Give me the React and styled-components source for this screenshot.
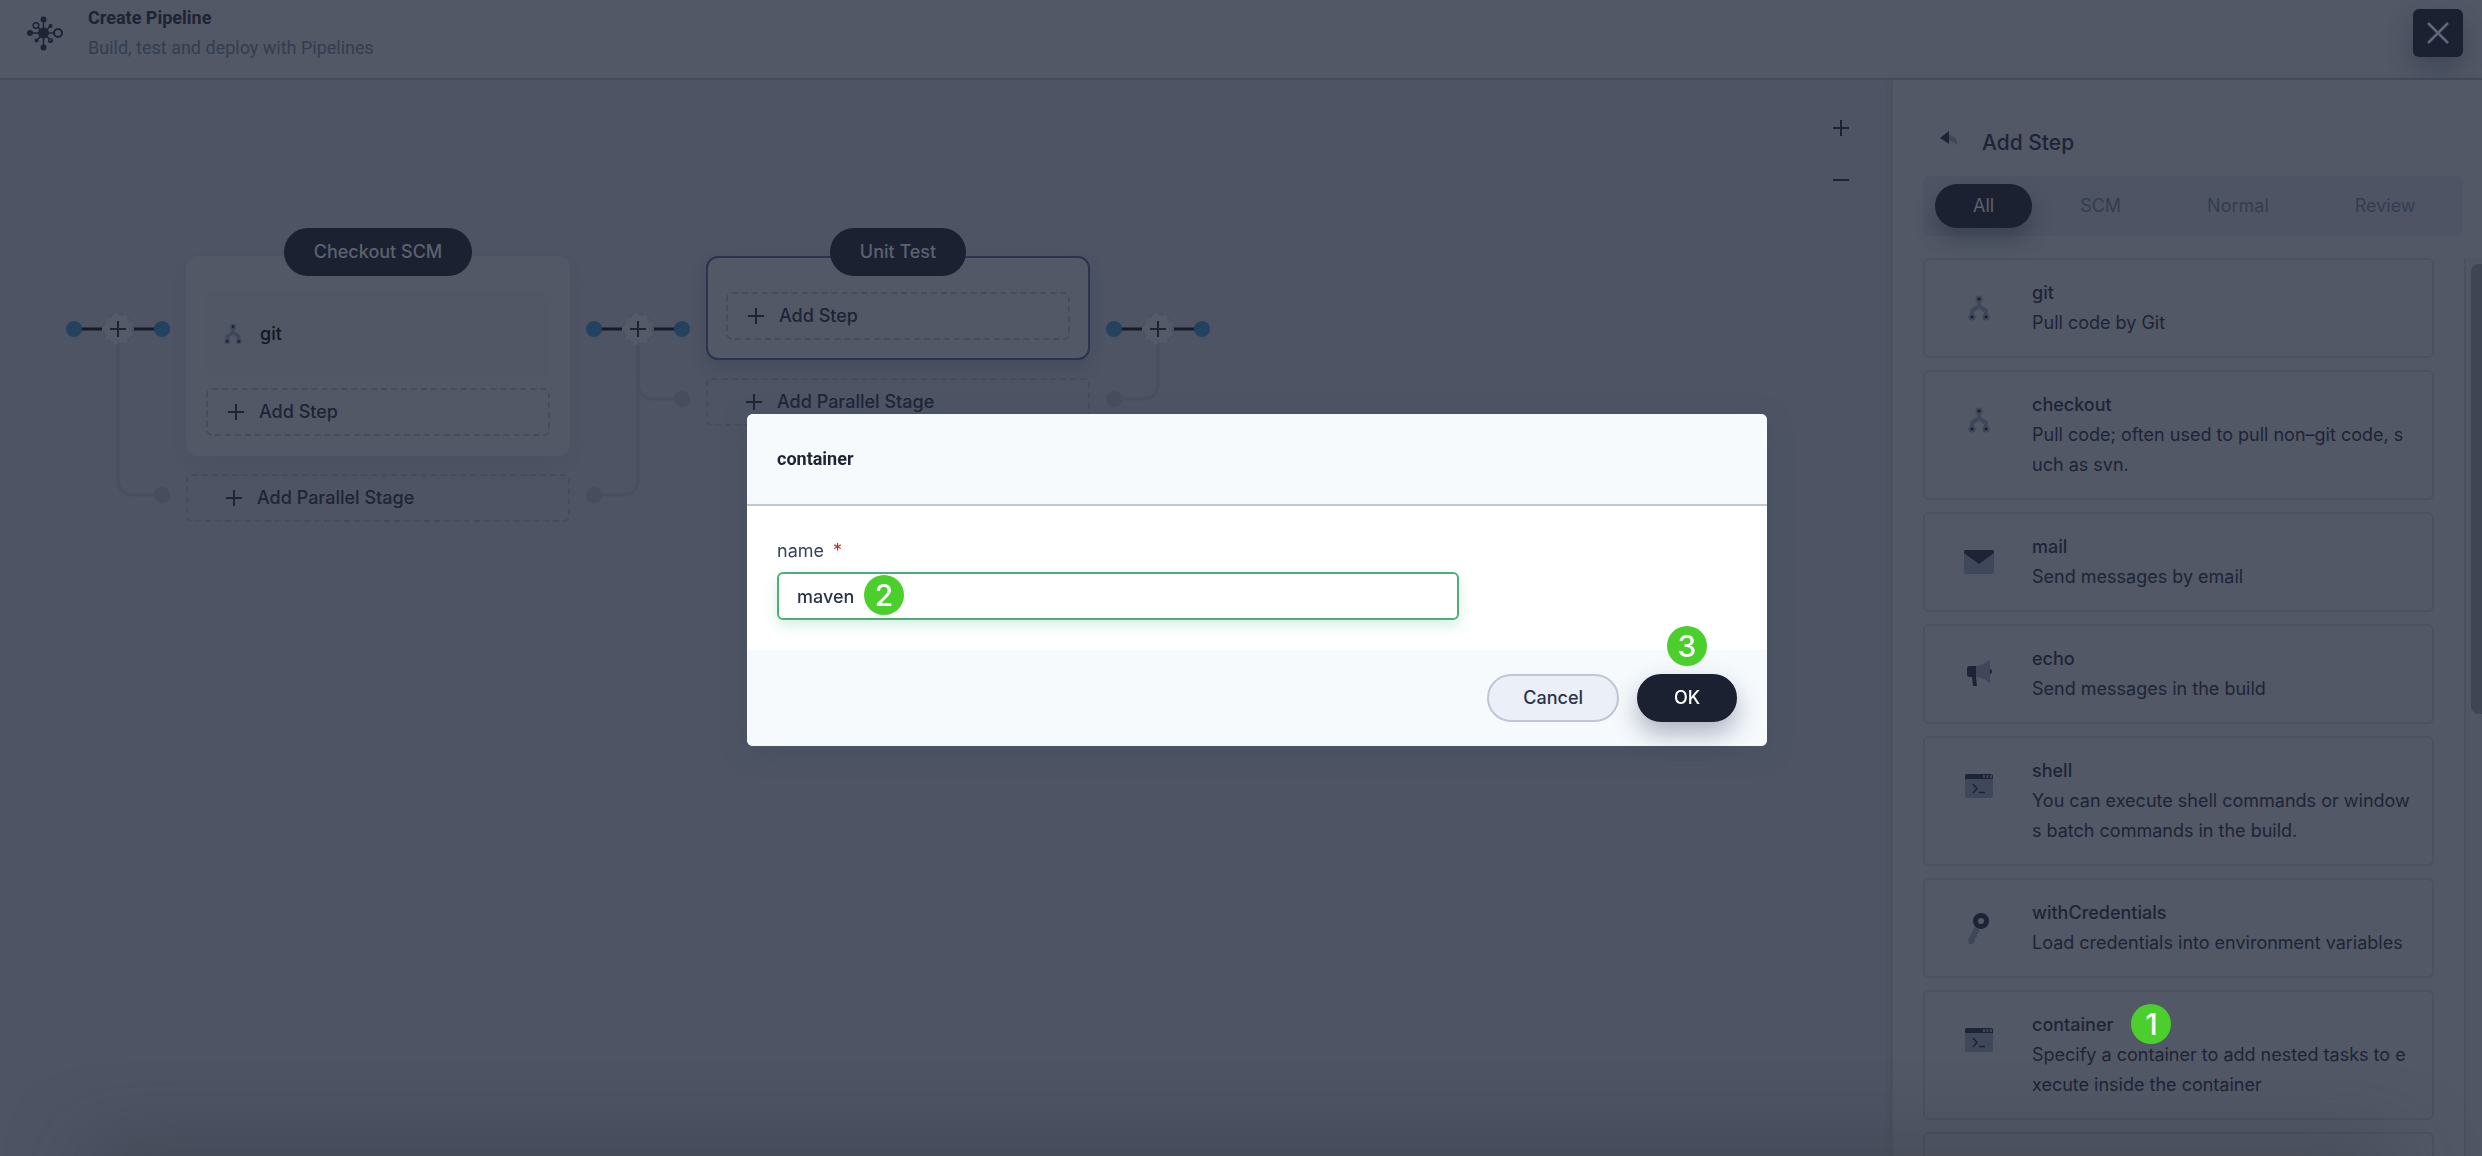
import { useState } from "react";
import styled, { createGlobalStyle } from "styled-components";

const colors = {
  canvas: "#4e5464",
  surface: "#525866",
  line: "#464c5a",
  lineSoft: "#4b5160",
  branch: "#494f5e",
  node: "#474d5c",
  ink: "#1c2131",
  text: "#1e2436",
  muted: "#343d50",
  iconLight: "#3e485a",
  blue: "#234260",
  green: "#4bcf2c",
};

const steps = [
  { name: "git", icon: "git", desc: "Pull code by Git" },
  {
    name: "checkout",
    icon: "git",
    desc: "Pull code; often used to pull non–git code, such as svn.",
  },
  { name: "mail", icon: "mail", desc: "Send messages by email" },
  { name: "echo", icon: "echo", desc: "Send messages in the build" },
  {
    name: "shell",
    icon: "shell",
    desc: "You can execute shell commands or windows batch commands in the build.",
  },
  {
    name: "withCredentials",
    icon: "key",
    desc: "Load credentials into environment variables",
  },
  {
    name: "container",
    icon: "shell",
    desc: "Specify a container to add nested tasks to execute inside the container",
    marker: 1,
  },
  { name: "", icon: null, desc: "" },
];

const tabs = ["All", "SCM", "Normal", "Review"];

const GitIcon = ({ width = 22, height = 26 }) => (
  <svg width={width} height={height} viewBox="0 0 22 26" aria-hidden="true">
    <path
      d="M11 4v7M4 22v-6l7-5 7 5v6"
      fill="none"
      stroke={colors.iconLight}
      strokeWidth="4"
      strokeLinejoin="round"
    />
    <g fill={colors.ink} stroke={colors.iconLight} strokeWidth="2">
      <circle cx="11" cy="4" r="2.600" />
      <circle cx="4" cy="22" r="2.600" />
      <circle cx="18" cy="22" r="2.600" />
    </g>
  </svg>
);

const MailIcon = () => (
  <svg width="30" height="24" viewBox="0 0 30 24" aria-hidden="true">
    <rect width="30" height="24" rx="2" fill={colors.iconLight} />
    <path d="M0 3V2Q0 0 2 0h26q2 0 2 2v1L15 14z" fill={colors.text} />
  </svg>
);

const EchoIcon = () => (
  <svg width="26" height="28" viewBox="0 0 26 28" aria-hidden="true">
    <path d="M10 6Q17 5 22 1q1-1 2 0v21q-1 1-2 0-5-5-12-5z" fill={colors.iconLight} />
    <path d="M10 6v11l1 9H7l-1-9H4q-3 0-3-3V9q0-3 3-3z" fill={colors.text} />
    <path d="M24 9q2 0 2 2.500t-2 2.500z" fill={colors.text} />
  </svg>
);

const ShellIcon = () => (
  <svg width="28" height="24" viewBox="0 0 28 24" aria-hidden="true">
    <rect width="28" height="24" rx="2" fill={colors.iconLight} />
    <path d="M0 5V2q0-2 2-2h24q2 0 2 2v3z" fill={colors.text} />
    <path d="M18 1h2v3h-2zM21.500 1h2v3h-2zM25 1h2v3h-2z" fill={colors.iconLight} />
    <path d="M8 10l4 4.500-4 4.500M14 18.500h6" fill="none" stroke={colors.text} strokeWidth="1.500" />
  </svg>
);

const KeyIcon = () => (
  <svg width="22" height="34" viewBox="0 0 22 34" aria-hidden="true">
    <path d="M7 16l5 4-3 3 0 3-2 1 0 3-2 3H1l-1-4z" fill={colors.iconLight} />
    <circle cx="13" cy="10" r="5.500" fill="none" stroke={colors.text} strokeWidth="5" />
  </svg>
);

const icons = {
  git: GitIcon,
  mail: MailIcon,
  echo: EchoIcon,
  shell: ShellIcon,
  key: KeyIcon,
};

const PlusIcon = () => (
  <svg width="16" height="16" viewBox="0 0 16 16" aria-hidden="true">
    <path d="M8 0v16M0 8h16" stroke="currentColor" strokeWidth="2" />
  </svg>
);

const MinusIcon = () => (
  <svg width="16" height="16" viewBox="0 0 16 16" aria-hidden="true">
    <path d="M0 8h16" stroke="currentColor" strokeWidth="2" />
  </svg>
);

const CloseIcon = () => (
  <svg width="22" height="22" viewBox="0 0 22 22" aria-hidden="true">
    <path d="M1 1l20 20M21 1L1 21" stroke="#60677a" strokeWidth="2.500" />
  </svg>
);

const BackIcon = () => (
  <svg width="20" height="16" viewBox="0 0 20 16" aria-hidden="true">
    <path d="M9 4q9 0 10 11-3-5-10-5z" fill={colors.iconLight} />
    <path d="M10 0v13L1 7z" fill={colors.text} />
  </svg>
);

const PipelineIcon = () => (
  <svg width="38" height="36" viewBox="0 0 38 36" aria-hidden="true">
    <g stroke={colors.text} strokeWidth="1.500">
      <path d="M17.500 5v26M4 18h24M11 11.500l13 13M24.500 11l-13.500 14" />
    </g>
    <g fill={colors.text}>
      <circle cx="17.500" cy="18" r="5.500" />
      <circle cx="17.500" cy="4.500" r="3" />
      <circle cx="4" cy="18" r="3" />
      <circle cx="17.500" cy="32.500" r="3" />
      <circle cx="24.500" cy="11" r="2" />
      <circle cx="10.500" cy="25.500" r="2" />
      <circle cx="24.500" cy="25.500" r="2.500" />
    </g>
    <g fill={colors.surface} stroke={colors.text} strokeWidth="2">
      <circle cx="32" cy="18" r="4" />
      <circle cx="10" cy="10.500" r="2.800" strokeWidth="1.500" />
    </g>
    <circle cx="24" cy="25" r="0.800" fill={colors.surface} />
  </svg>
);

/* left / right: height of the branch leading to a parallel stage */
function Connector({ left, right }) {
  const branch = (side, y) => {
    const end = side === "left" ? 24 : 112;
    const bend = side === "left" ? 52 : 84;
    return (
      <g>
        <path
          d={`M68 88V${y - 16}Q68 ${y} ${bend} ${y}H${end}`}
          fill="none"
          stroke={colors.branch}
          strokeWidth="3"
        />
        <circle cx={end} cy={y} r="8" fill={colors.node} />
      </g>
    );
  };

  return (
    <ConnectorBox>
      <svg width="136" height="250" viewBox="0 0 136 250" aria-hidden="true">
        {left && branch("left", left)}
        {right && branch("right", right)}
        <path d="M24 73H52M84 73H112" stroke="#171b27" strokeWidth="3" />
        <circle cx="24" cy="73" r="8" fill={colors.blue} />
        <circle cx="112" cy="73" r="8" fill={colors.blue} />
      </svg>
      <AddStageButton type="button" aria-label="Add stage">
        <PlusIcon />
      </AddStageButton>
    </ConnectorBox>
  );
}

function Stage({ name, tasks = [], active }) {
  return (
    <StageColumn>
      <StageCard $active={active}>
        <StageName>{name}</StageName>
        {tasks.map((task) => (
          <Task key={task}>
            <GitIcon width={18} height={22} />
            {task}
          </Task>
        ))}
        <DashedButton type="button">
          <PlusIcon />
          Add Step
        </DashedButton>
      </StageCard>
      <DashedButton type="button" $wide>
        <PlusIcon />
        Add Parallel Stage
      </DashedButton>
    </StageColumn>
  );
}

function StepCard({ step }) {
  const Icon = icons[step.icon];
  return (
    <Card>
      <CardIcon>{Icon && <Icon />}</CardIcon>
      <div>
        <CardTitle>
          {step.name}
          {step.marker && <CardMarker>{step.marker}</CardMarker>}
        </CardTitle>
        <CardText>{step.desc}</CardText>
      </div>
    </Card>
  );
}

export default function App() {
  const [tab, setTab] = useState("All");
  const [name, setName] = useState("maven");

  return (
    <>
      <GlobalStyle />
      <Page>
        <Header>
          <PipelineIcon />
          <HeaderText>
            <h1>Create Pipeline</h1>
            <p>Build, test and deploy with Pipelines</p>
          </HeaderText>
          <CloseButton type="button" aria-label="Close">
            <CloseIcon />
          </CloseButton>
        </Header>

        <Main>
          <Canvas>
            <ZoomControls>
              <ZoomButton type="button" aria-label="Zoom in">
                <PlusIcon />
              </ZoomButton>
              <ZoomButton type="button" aria-label="Zoom out">
                <MinusIcon />
              </ZoomButton>
            </ZoomControls>
            <Pipeline>
              <Connector right={239} />
              <Stage name="Checkout SCM" tasks={["git"]} />
              <Connector left={239} right={143} />
              <Stage name="Unit Test" active />
              <Connector left={143} />
            </Pipeline>
          </Canvas>

          <Sidebar>
            <SidebarHeading>
              <BackButton type="button" aria-label="Back">
                <BackIcon />
              </BackButton>
              <h2>Add Step</h2>
            </SidebarHeading>
            <Tabs>
              {tabs.map((item) => (
                <Tab
                  key={item}
                  type="button"
                  $active={item === tab}
                  onClick={() => setTab(item)}
                >
                  {item}
                </Tab>
              ))}
            </Tabs>
            <ListArea>
              <List>
                {steps.map((step, i) => (
                  <StepCard key={i} step={step} />
                ))}
              </List>
              <ScrollTrack>
                <ScrollThumb />
              </ScrollTrack>
            </ListArea>
          </Sidebar>
        </Main>
        <BottomShade />
      </Page>

      <Overlay>
        <Modal role="dialog" aria-labelledby="modal-title">
          <ModalHeader id="modal-title">container</ModalHeader>
          <ModalBody>
            <Label htmlFor="container-name">
              name <span>*</span>
            </Label>
            <InputWrap>
              <Input
                id="container-name"
                value={name}
                onChange={(e) => setName(e.target.value)}
              />
              <InputMarker>2</InputMarker>
            </InputWrap>
          </ModalBody>
          <ModalFooter>
            <Button type="button">Cancel</Button>
            <Button type="button" $primary>
              OK
              <OkMarker>3</OkMarker>
            </Button>
          </ModalFooter>
        </Modal>
      </Overlay>
    </>
  );
}

const GlobalStyle = createGlobalStyle`
  * {
    box-sizing: border-box;
  }

  body {
    margin: 0;
    background: ${colors.canvas};
    font-family: Inter, "Liberation Sans", sans-serif;
    font-size: 18px;
    line-height: 30px;
    color: ${colors.text};
  }

  h1, h2, h3, p {
    margin: 0;
    font-size: inherit;
    font-weight: inherit;
  }

  button, input {
    font: inherit;
    color: inherit;
  }

  button {
    padding: 0;
    border: 0;
    background: none;
    cursor: pointer;
  }

  svg {
    display: block;
    flex: none;
  }
`;

const Page = styled.div`
  position: relative;
  display: flex;
  flex-direction: column;
  height: 100vh;
  overflow: hidden;
`;

const Header = styled.header`
  display: flex;
  align-items: center;
  padding: 3px 19px 15px 26px;
  background: ${colors.surface};
  border-bottom: 2px solid ${colors.line};
`;

const HeaderText = styled.div`
  flex: 1;
  margin-left: 24px;
  font-family: Roboto, sans-serif;

  h1 {
    font-weight: 700;
  }

  p {
    color: ${colors.muted};
  }
`;

const CloseButton = styled.button`
  display: flex;
  align-items: center;
  justify-content: center;
  width: 50px;
  height: 48px;
  border-radius: 6px;
  background: ${colors.ink};
  box-shadow: 0 12px 24px rgba(36, 42, 60, 0.4);
`;

const Main = styled.main`
  display: flex;
  flex: 1;
  min-height: 0;
`;

const Canvas = styled.section`
  flex: 1;
  min-width: 0;
  background: ${colors.canvas};
`;

const ZoomControls = styled.div`
  display: flex;
  flex-direction: column;
  align-items: flex-end;
  gap: 16px;
  padding: 30px 34px 0 0;
`;

const ZoomButton = styled.button`
  display: flex;
  align-items: center;
  justify-content: center;
  width: 36px;
  height: 36px;
`;

const Pipeline = styled.div`
  display: flex;
  align-items: flex-start;
  margin-top: 58px;
  padding-left: 50px;
`;

const ConnectorBox = styled.div`
  display: grid;
  justify-items: center;
  flex: none;

  > * {
    grid-area: 1 / 1;
  }
`;

const AddStageButton = styled.button`
  display: flex;
  align-items: center;
  justify-content: center;
  width: 32px;
  height: 32px;
  margin-top: 57px;
  border: 2px dashed ${colors.lineSoft};
  border-radius: 50%;
  background: #545a68;
`;

const StageColumn = styled.div`
  flex: none;
  width: 384px;
`;

const StageCard = styled.div`
  display: flex;
  flex-direction: column;
  gap: 12px;
  padding: 0 18px 18px;
  border: 2px solid ${(props) => (props.$active ? "#2c3350" : colors.surface)};
  border-radius: 12px;
  background: ${colors.surface};
  box-shadow: 0 8px 16px rgba(36, 46, 66, ${(props) => (props.$active ? 0.2 : 0.08)});
`;

const StageName = styled.div`
  align-self: center;
  margin: -30px 0 4px;
  padding: 9px 30px;
  border-radius: 24px;
  background: ${colors.ink};
  color: #5b6170;
  font-weight: 500;
`;

const Task = styled.div`
  display: flex;
  align-items: center;
  gap: 18px;
  height: 84px;
  padding-left: 18px;
  border-radius: 6px;
  background: #515765;
  color: #14171f;
  font-weight: 500;
`;

const DashedButton = styled.button`
  display: flex;
  align-items: center;
  gap: 15px;
  height: 48px;
  width: 100%;
  margin-top: ${(props) => (props.$wide ? "18px" : "0")};
  padding-left: ${(props) => (props.$wide ? "38px" : "20px")};
  border: 2px dashed ${colors.line};
  border-radius: 6px;
  font-weight: 500;
`;

const Sidebar = styled.aside`
  display: flex;
  flex-direction: column;
  flex: none;
  width: 589px;
  padding: 48px 0 0 30px;
  background: ${colors.surface};
  box-shadow: -2px 0 6px rgba(36, 46, 66, 0.12);
`;

const SidebarHeading = styled.div`
  display: flex;
  align-items: center;
  gap: 23px;
  padding-left: 16px;

  h2 {
    font-size: 21px;
    font-weight: 500;
  }
`;

const BackButton = styled.button`
  padding-bottom: 8px;
`;

const Tabs = styled.div`
  display: flex;
  align-items: center;
  gap: 10px;
  margin: 18px 19px 22px 0;
  padding: 8px 12px;
  border-radius: 6px;
  background: ${colors.canvas};
`;

const Tab = styled.button`
  height: 44px;
  padding: 0 38px;
  border-radius: 22px;
  background: ${(props) => (props.$active ? colors.ink : "none")};
  color: ${(props) => (props.$active ? "#5b6170" : colors.muted)};
  box-shadow: ${(props) => (props.$active ? "0 12px 20px rgba(36, 42, 60, 0.4)" : "none")};
`;

const ListArea = styled.div`
  display: flex;
  flex: 1;
  min-height: 0;
`;

const List = styled.div`
  display: flex;
  flex-direction: column;
  flex: 1;
  gap: 12px;
  margin-right: 30px;
  overflow: hidden;
`;

const Card = styled.article`
  display: flex;
  flex: none;
  min-height: 100px;
  padding: 18px 21px 18px 36px;
  border: 2px solid ${colors.lineSoft};
  border-radius: 6px;
`;

const CardIcon = styled.div`
  display: flex;
  align-items: center;
  justify-content: center;
  flex: none;
  width: 36px;
  height: 60px;
  margin-right: 35px;
`;

const CardTitle = styled.h3`
  position: relative;
  width: fit-content;
  font-weight: 500;
`;

const CardText = styled.p`
  word-break: break-all;
`;

const ScrollTrack = styled.div`
  width: 18px;
  padding: 6px 0 0 5px;
  border-left: 2px solid #4a505f;
  background: #505664;
`;

const ScrollThumb = styled.div`
  height: 450px;
  border-radius: 8px 0 0 8px;
  background: #3f4552;
`;

const BottomShade = styled.div`
  position: absolute;
  right: 90px;
  bottom: -40px;
  left: 90px;
  height: 40px;
  box-shadow: 0 0 80px rgba(45, 50, 56, 0.6);
`;

const Overlay = styled.div`
  position: fixed;
  inset: 0;
  display: flex;
  align-items: center;
  justify-content: center;
  padding: 4px 0 0 32px;
`;

const Modal = styled.section`
  width: 1020px;
  max-width: 100%;
  border-radius: 6px;
  background: #fff;
  box-shadow: 0 6px 24px rgba(60, 80, 90, 0.4);
`;

const ModalHeader = styled.h2`
  padding: 30px;
  border-bottom: 2px solid #c0c8d4;
  border-radius: 6px 6px 0 0;
  background: #f6fafd;
  font-family: Roboto, sans-serif;
  font-weight: 700;
`;

const ModalBody = styled.div`
  padding: 30px;
`;

const Label = styled.label`
  display: block;
  margin-bottom: 6px;
  color: #36435c;

  span {
    margin-left: 4px;
    color: #ca2621;
  }
`;

const InputWrap = styled.div`
  position: relative;
  width: 71%;
`;

const Input = styled.input`
  display: block;
  width: 100%;
  height: 48px;
  padding: 0 18px;
  border: 2px solid #4caf78;
  border-radius: 6px;
  outline: none;
  background: #fff;
  color: #2b334a;
  font-weight: 500;
  box-shadow: 0 6px 14px rgba(85, 188, 138, 0.24);
`;

const ModalFooter = styled.footer`
  display: flex;
  justify-content: flex-end;
  gap: 18px;
  padding: 24px 30px;
  border-radius: 0 0 6px 6px;
  background: #f6fafd;
`;

const Button = styled.button`
  position: relative;
  min-width: 100px;
  height: 48px;
  padding: 0 34px;
  border: 2px solid ${(props) => (props.$primary ? colors.ink : "#bfc8d2")};
  border-radius: 24px;
  background: ${(props) => (props.$primary ? colors.ink : "#eaeff8")};
  color: ${(props) => (props.$primary ? "#fff" : "#2b334a")};
  font-weight: 500;
  box-shadow: ${(props) => (props.$primary ? "0 12px 24px rgba(36, 46, 80, 0.35)" : "none")};
`;

const Marker = styled.span`
  position: absolute;
  display: flex;
  align-items: center;
  justify-content: center;
  width: 40px;
  height: 40px;
  border-radius: 50%;
  background: ${colors.green};
  color: #fff;
  font-size: 30px;
  font-weight: 500;
`;

const CardMarker = styled(Marker)`
  top: -6px;
  left: calc(100% + 18px);
`;

const InputMarker = styled(Marker)`
  top: 3px;
  left: 87px;
`;

const OkMarker = styled(Marker)`
  top: -50px;
  left: calc(50% - 20px);
`;
